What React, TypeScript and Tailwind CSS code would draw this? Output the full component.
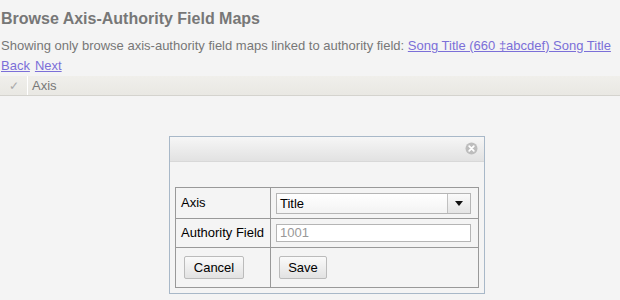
import React from "react";

export default function App() {
  return (
    <div className="w-[620px] h-[300px] bg-[#f4f4f4] overflow-hidden relative" style={{ fontFamily: '"Liberation Sans", Arial, sans-serif' }}>
      <div className="px-[1px] pt-[9px]">
        <h1 className="text-[16px] leading-[20px] font-bold text-[#777]">Browse Axis-Authority Field Maps</h1>
        <div className="mt-[9px] text-[13px] leading-[16px] text-[#777] whitespace-nowrap">
          Showing only browse axis-authority field maps linked to authority field:{" "}
          <a className="text-[#7b6fd8] underline">Song Title (660 ‡abcdef) Song Title</a>
        </div>
        <div className="text-[13px] leading-[16px] mt-[4px] flex gap-[5px]">
          <a className="text-[#7b6fd8] underline">Back</a>
          <a className="text-[#7b6fd8] underline">Next</a>
        </div>
      </div>
      <div className="mt-[2px] h-[20px] flex items-center bg-gradient-to-b from-[#f0efeb] to-[#e9e8e3] border-b border-[#d4d3ce] text-[13px] text-[#777]">
        <div className="w-[28px] h-full flex items-center justify-center border-r border-[#fff] text-[#aaa] text-[12px]">✓</div>
        <div className="pl-[4px]">Axis</div>
      </div>

      <div className="absolute left-[169px] top-[136px] w-[316px] h-[158px] border border-[#a8b8c8] bg-[#f4f4f4]">
        <div className="h-[25px] bg-gradient-to-b from-[#f6f6f6] to-[#e2e2e2] border-b border-[#d8d8d8] relative">
          <svg className="absolute right-[6px] top-[5px]" width="13" height="13" viewBox="0 0 13 13">
            <circle cx="6.5" cy="6.5" r="6" fill="#bdbdbd" />
            <path d="M4.2 4.2 L8.8 8.8 M8.8 4.2 L4.2 8.8" stroke="#fff" strokeWidth="1.8" strokeLinecap="round" />
          </svg>
        </div>
        <div className="pt-[25px] pl-[5px]">
          <table className="border-collapse border border-[#999] text-[13px] text-black">
            <tbody>
              <tr className="h-[31px]">
                <td className="border border-[#999] w-[95px] pl-[5px]">Axis</td>
                <td className="border border-[#999] w-[208px] px-[5px]">
                  <div className="flex h-[21px] w-[195px] border border-[#b5b5b5] bg-gradient-to-b from-[#fff] to-[#f3f3f3]">
                    <div className="flex-1 pl-[3px] leading-[19px]">Title</div>
                    <div className="w-[23px] border-l border-[#c0c0c0] bg-gradient-to-b from-[#fafafa] to-[#e4e4e4] flex items-center justify-center">
                      <svg width="8" height="5" viewBox="0 0 8 5"><path d="M0 0 L8 0 L4 5 Z" fill="#111" /></svg>
                    </div>
                  </div>
                </td>
              </tr>
              <tr className="h-[29px]">
                <td className="border border-[#999] pl-[5px] whitespace-nowrap">Authority Field</td>
                <td className="border border-[#999] px-[5px]">
                  <div className="h-[18px] w-[195px] border border-[#b5b5b5] bg-white text-[#999] pl-[3px] leading-[16px]">1001</div>
                </td>
              </tr>
              <tr className="h-[40px]">
                <td className="border border-[#999] pl-[8px]">
                  <button className="h-[23px] w-[60px] border border-[#bbb] rounded-[2px] bg-gradient-to-b from-[#fafafa] to-[#e2e2e2] text-[13px] text-black">Cancel</button>
                </td>
                <td className="border border-[#999] pl-[8px]">
                  <button className="h-[23px] w-[48px] border border-[#bbb] rounded-[2px] bg-gradient-to-b from-[#fafafa] to-[#e2e2e2] text-[13px] text-black">Save</button>
                </td>
              </tr>
            </tbody>
          </table>
        </div>
      </div>
    </div>
  );
}
